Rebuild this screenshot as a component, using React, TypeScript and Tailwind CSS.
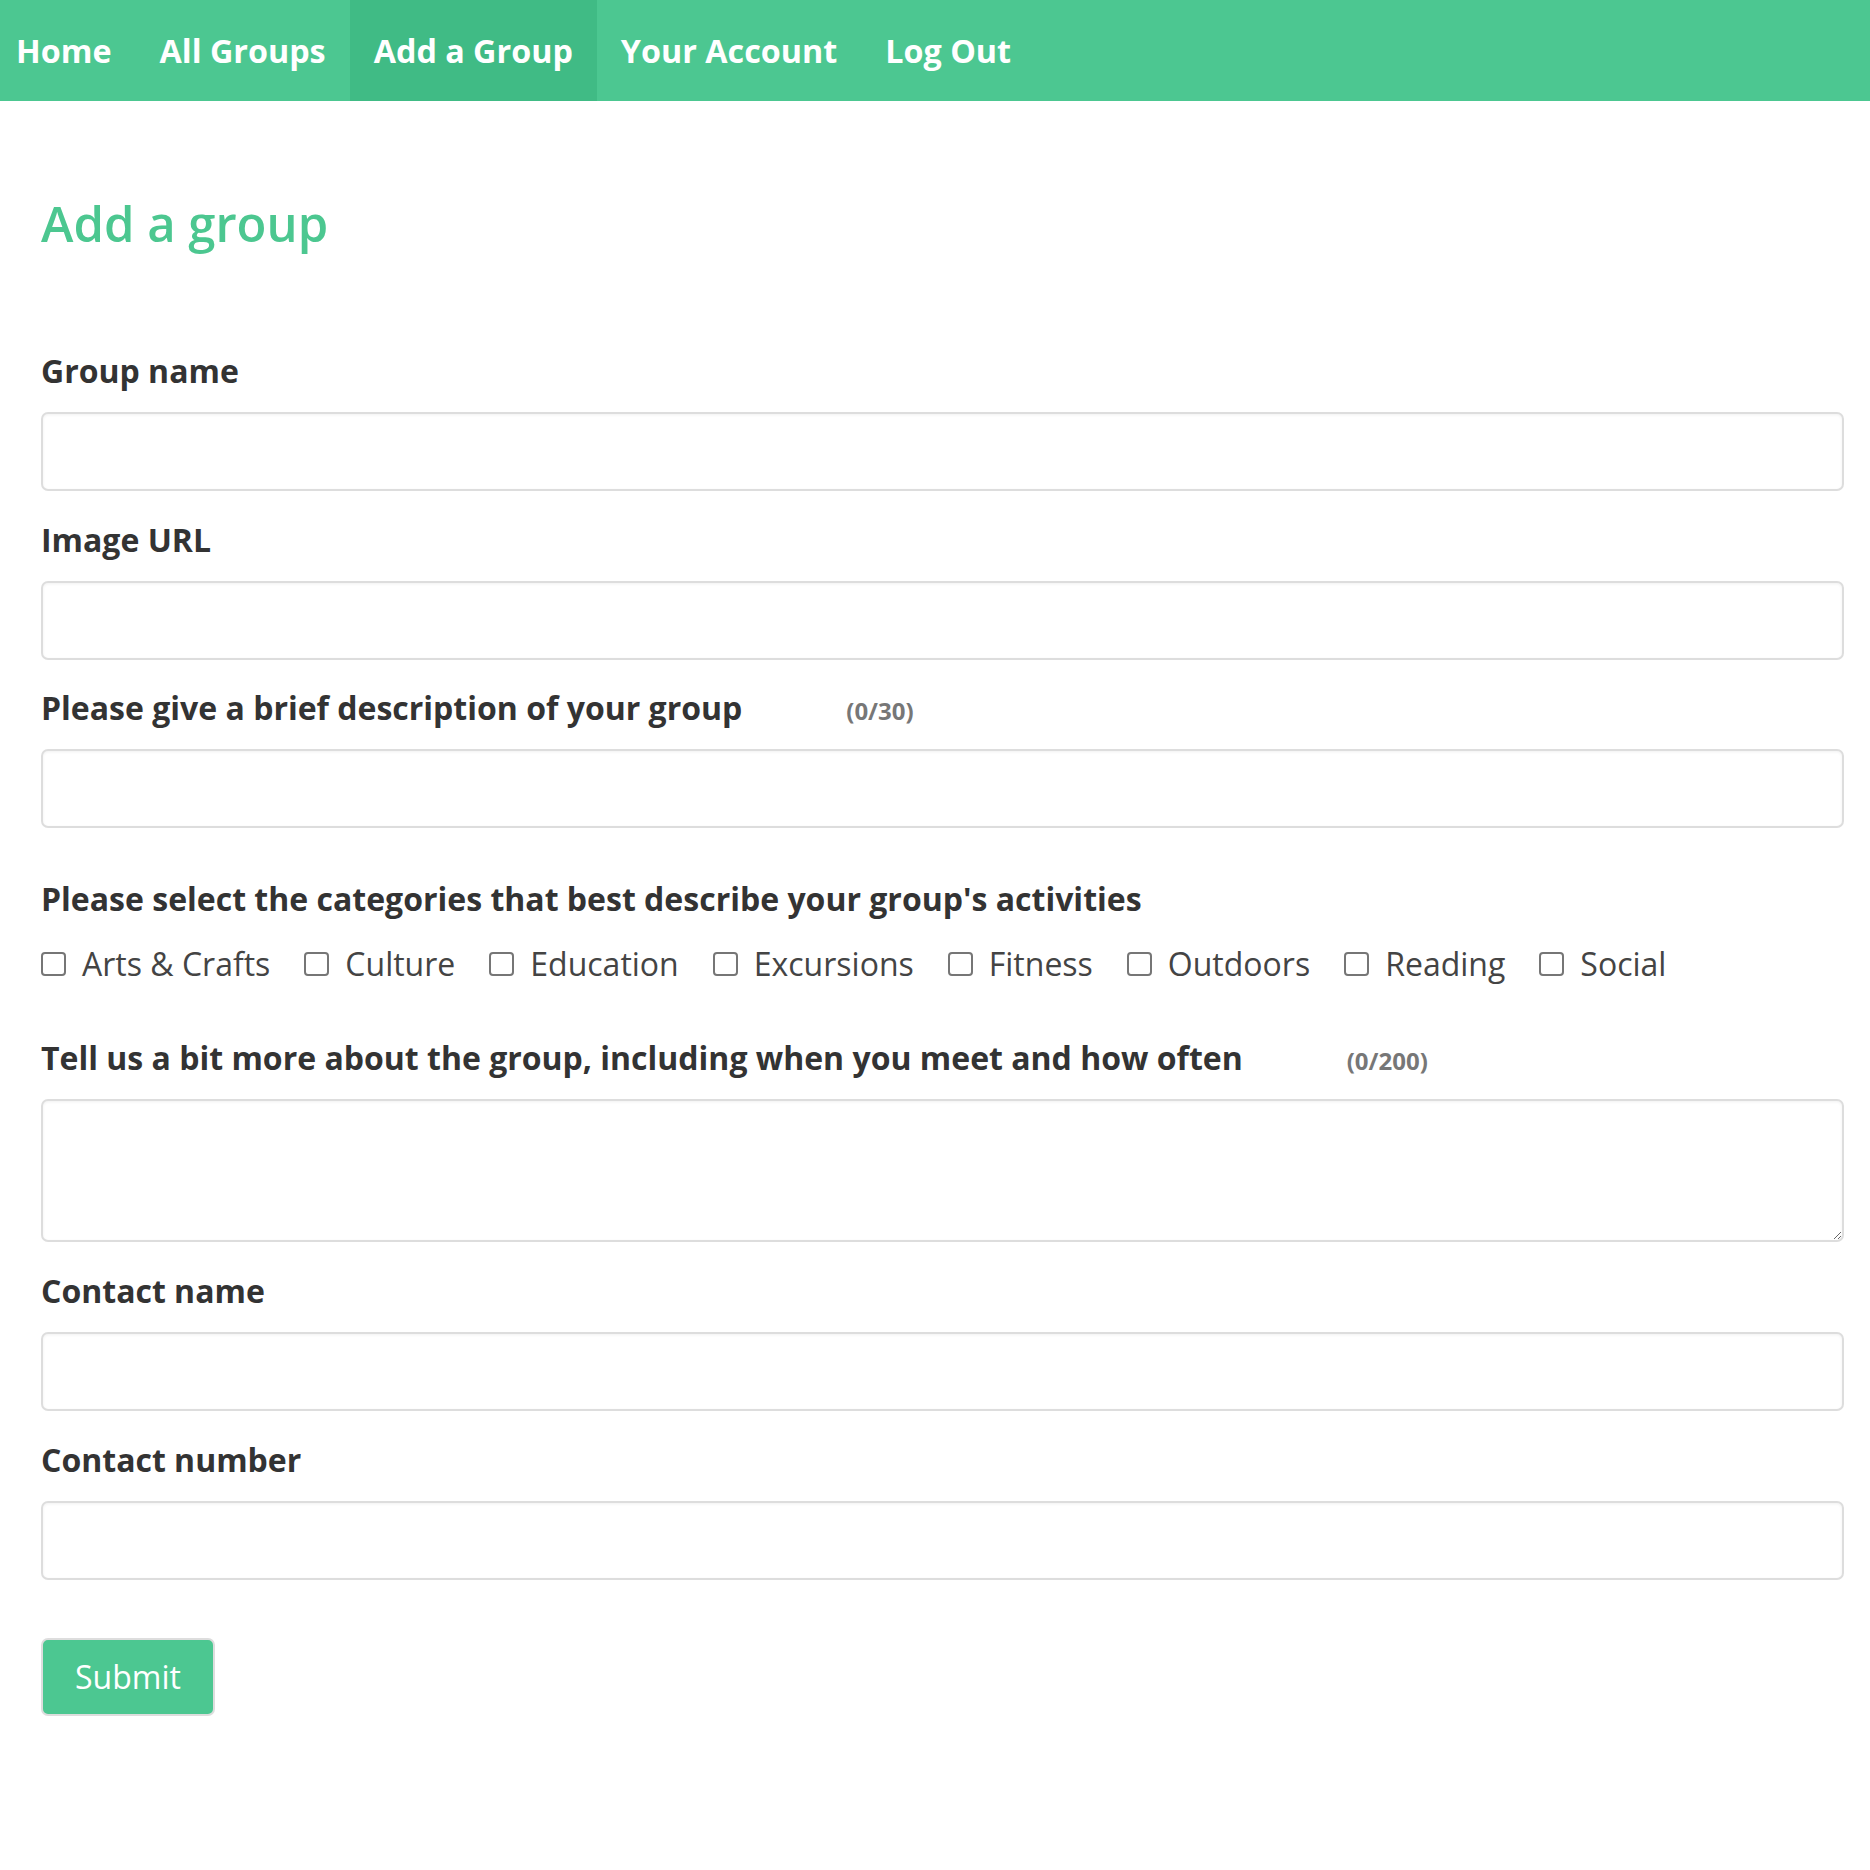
import React from "react";

const font = { fontFamily: '"Open Sans", "Noto Sans", sans-serif' };

function Label({ text, counter }: { text: string; counter?: string }) {
  return (
    <div className="flex items-baseline h-[42px] leading-[42px]">
      <span className="text-[32px] font-bold text-[#333333]">{text}</span>
      {counter && (
        <span className="ml-[104px] text-[24px] font-bold text-[#777777]">{counter}</span>
      )}
    </div>
  );
}

function TextInput() {
  return (
    <input
      type="text"
      className="block w-full h-[79px] mt-[20px] border-2 border-[#dddddd] rounded-[7px] bg-white shadow-[inset_0_1px_3px_rgba(0,0,0,0.06)] outline-none px-4 text-[31px]"
    />
  );
}

const categories = [
  "Arts & Crafts",
  "Culture",
  "Education",
  "Excursions",
  "Fitness",
  "Outdoors",
  "Reading",
  "Social",
];

export default function App() {
  return (
    <div className="min-h-[1870px] bg-white" style={font}>
      <nav className="flex h-[101px] bg-[#4cc791]">
        {["Home", "All Groups", "Add a Group", "Your Account", "Log Out"].map((item, i) => (
          <a
            key={item}
            className={`flex items-center h-full text-[32.3px] font-bold text-white ${
              i === 0 ? "pl-[16px] pr-[24px]" : "px-[24px]"
            } ${item === "Add a Group" ? "bg-[#40bb85]" : ""}`}
          >
            {item}
          </a>
        ))}
      </nav>

      <main className="pl-[41px] pr-[26px]">
        <h1 className="mt-[88px] h-[68px] leading-[68px] text-[49px] font-semibold text-[#4cc790]">
          Add a group
        </h1>

        <form className="mt-[93px]">
          <Label text="Group name" />
          <TextInput />

          <div className="mt-[28px]">
            <Label text="Image URL" />
            <TextInput />
          </div>

          <div className="mt-[27px]">
            <Label text="Please give a brief description of your group" counter="(0/30)" />
            <TextInput />
          </div>

          <div className="mt-[50px]">
            <Label text="Please select the categories that best describe your group's activities" />
            <div className="mt-[22px] flex flex-wrap items-center gap-x-[34px] h-[44px]">
              {categories.map((c) => (
                <label key={c} className="flex items-center gap-[16px]">
                  <span className="block w-[25px] h-[24px] border-2 border-[#767676] rounded-[4px] bg-white" />
                  <span className="text-[32px] leading-[44px] text-[#444444]">{c}</span>
                </label>
              ))}
            </div>
          </div>

          <div className="mt-[51px]">
            <Label
              text="Tell us a bit more about the group, including when you meet and how often"
              counter="(0/200)"
            />
            <textarea className="block w-full h-[143px] mt-[20px] border-2 border-[#dddddd] rounded-[7px] bg-white shadow-[inset_0_1px_3px_rgba(0,0,0,0.06)] outline-none px-4 text-[31px]" />
          </div>

          <div className="mt-[28px]">
            <Label text="Contact name" />
            <TextInput />
          </div>

          <div className="mt-[28px]">
            <Label text="Contact number" />
            <TextInput />
          </div>

          <button
            type="button"
            className="mt-[58px] w-[174px] h-[78px] border-2 border-[#dddddd] rounded-[7px] bg-[#4cc791] text-white text-[32px] font-normal"
          >
            Submit
          </button>
        </form>
      </main>
    </div>
  );
}
